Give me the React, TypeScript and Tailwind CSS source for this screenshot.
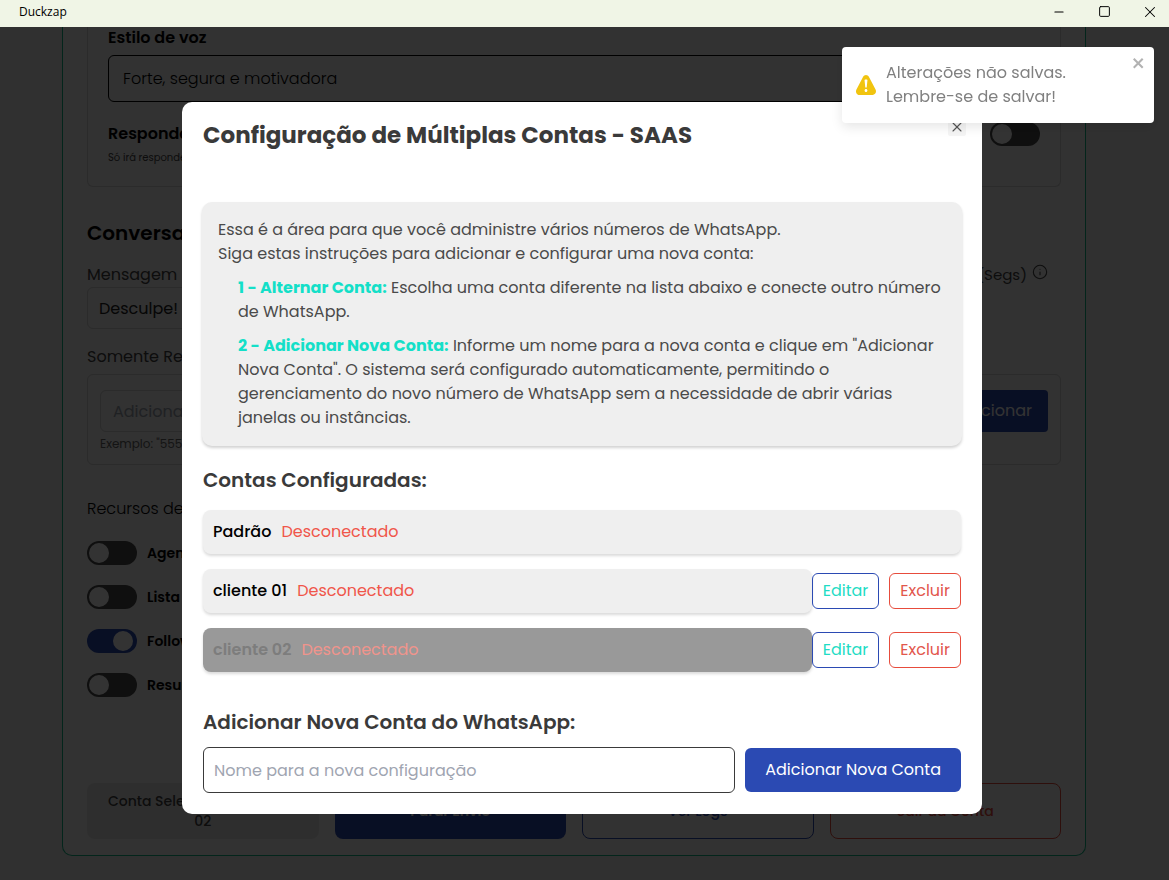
import { useState } from 'react'
import { Info, Minus, Square, X } from 'lucide-react'

type Account = { name: string; fixed?: boolean; selected?: boolean }

const initialAccounts: Account[] = [
  { name: 'Padrão', fixed: true },
  { name: 'cliente 01' },
  { name: 'cliente 02', selected: true },
]

const resources = [
  { label: 'Agenda', on: false },
  { label: 'Lista', on: false },
  { label: 'Follow', on: true },
  { label: 'Resumo', on: false },
]

function Toggle({ label, on, hideLabel }: { label: string; on: boolean; hideLabel?: boolean }) {
  const [checked, setChecked] = useState(on)
  return (
    <label className="relative flex items-center gap-[10px] text-sm leading-6 font-semibold text-black">
      <input type="checkbox" aria-label={label} className="peer absolute h-6 w-[50px] opacity-0" checked={checked} onChange={e => setChecked(e.target.checked)} />
      <span className="flex h-6 w-[50px] shrink-0 items-center rounded-full bg-[#4a4a4a] pr-1 pl-[2px] peer-checked:justify-end peer-checked:bg-[#2b4ab3]">
        <span className="size-5 rounded-full bg-white" />
      </span>
      {!hideLabel && <span>{label}</span>}
    </label>
  )
}

function TitleBar() {
  return (
    <header className="flex h-[27px] items-center justify-between bg-[#f0f5e6] pr-3 pb-1 pl-[19px] text-black">
      <h1 className="font-['Open_Sans',sans-serif] text-xs leading-6">Duckzap</h1>
      <div className="flex items-center gap-[32px]">
        <button aria-label="Minimizar"><Minus className="size-[14px]" strokeWidth={1.8} /></button>
        <button aria-label="Maximizar"><Square className="size-[13px]" strokeWidth={1.8} /></button>
        <button aria-label="Fechar janela"><X className="-mx-[2px] size-[18px]" strokeWidth={1.4} /></button>
      </div>
    </header>
  )
}

function SettingsPage() {
  return (
    <main className="bg-[#ededed] pr-[21px] pb-6">
      <div className="mx-auto max-w-5xl rounded-b-[10px] border-x border-b border-[#12b886] bg-[#f7f7f7] px-6 pb-4 text-[#444]">
        <section className="rounded-b-md border-x border-b border-[#d4d4d4] px-5 pb-5">
          <label htmlFor="voz" className="block leading-[22px] font-semibold text-black">Estilo de voz</label>
          <input id="voz" defaultValue="Forte, segura e motivadora" className="mt-[6px] h-[47px] w-full rounded-md border border-black px-[14px] font-light text-black" />
          <div className="mt-5 flex items-start justify-between">
            <div>
              <p className="leading-6 font-semibold text-black">Responder</p>
              <p className="mt-1 text-[10px] leading-4">Só irá responder</p>
            </div>
            <Toggle label="Responder" on={false} hideLabel />
          </div>
        </section>

        <h2 className="mt-8 text-xl leading-7 font-semibold text-black">Conversa</h2>
        <div className="mt-4 flex justify-between">
          <div className="w-1/2">
            <label htmlFor="msg" className="block leading-6">Mensagem</label>
            <input id="msg" defaultValue="Desculpe!" className="h-[42px] w-full rounded-md border border-[#d4d4d4] px-[11px] text-[#222]" />
          </div>
          <div className="flex h-6 items-center gap-[5px] pr-[13px] text-[15px]">
            (Segs)
            <Info className="mb-[6px] size-4" strokeWidth={1.6} />
          </div>
        </div>

        <p className="mt-4 leading-6">Somente Responder</p>
        <section className="mt-[5px] rounded-md border border-[#d4d4d4] px-3 pt-[15px] pb-3">
          <div className="flex gap-2">
            <input aria-label="Número" placeholder="Adicionar" className="h-[42px] min-w-0 flex-1 rounded-md border border-[#d4d4d4] px-3 placeholder:text-[#9ca3af]" />
            <button className="h-[42px] rounded bg-[#2b4ab3] px-4 text-white">Adicionar</button>
          </div>
          <p className="mt-1 text-xs leading-4 text-[#666]">Exemplo: "5551"</p>
        </section>

        <p className="mt-8 leading-6 font-light text-black">Recursos de</p>
        <div className="mt-5 flex flex-col items-start gap-5">
          {resources.map(r => <Toggle key={r.label} label={r.label} on={r.on} />)}
        </div>

        <div className="mt-[86px] grid grid-cols-4 gap-4 text-sm leading-5">
          <p className="rounded-lg bg-[#e6e6e6] px-4 py-2 text-center font-medium">Conta Selecionada: cliente 02</p>
          <button className="rounded-lg bg-[#2b4ab3] font-semibold text-white">Parar Envio</button>
          <button className="rounded-lg border border-[#2b4ab3] font-medium text-[#2b4ab3]">Ver Logs</button>
          <button className="rounded-lg border border-[#e74c3c] font-medium text-[#e74c3c]">Sair da Conta</button>
        </div>
      </div>
    </main>
  )
}

function AccountRow({ account, onRemove }: { account: Account; onRemove: () => void }) {
  return (
    <li className="flex items-center">
      <button
        disabled={account.selected}
        className="flex h-11 flex-1 items-center gap-[10px] rounded-lg bg-[#efefef] px-[10px] font-medium text-black shadow-[0_2px_3px_rgba(0,0,0,0.15)] disabled:bg-[#999] disabled:font-semibold disabled:text-[#7d7d7d]"
      >
        {account.name}
        <span className={account.selected ? 'font-normal text-[#f0948c]' : 'font-normal text-[#f0564a]'}>Desconectado</span>
      </button>
      {!account.fixed && (
        <div className="flex gap-[10px]">
          <button className="h-9 rounded-md border border-[#2b4ab3] px-[10px] text-[#1fdcc5]">Editar</button>
          <button onClick={onRemove} className="h-9 rounded-md border border-[#e74c3c] px-[10px] text-[#e2574c]">Excluir</button>
        </div>
      )}
    </li>
  )
}

function AccountsModal() {
  const [accounts, setAccounts] = useState(initialAccounts)
  const [name, setName] = useState('')

  function add(e: React.FormEvent) {
    e.preventDefault()
    if (!name.trim()) return
    setAccounts([...accounts, { name }])
    setName('')
  }

  return (
    <div className="fixed inset-x-0 top-[27px] bottom-0 flex items-start justify-center bg-black/80 pt-[75px] pr-[5px]">
      <div role="dialog" aria-labelledby="modal-title" className="relative w-full max-w-[800px] rounded-[10px] bg-white px-5 pt-4 pb-[21px] text-[#3a3a3a]">
        <button aria-label="Fechar" className="absolute top-4 right-4 flex size-[18px] items-center justify-center rounded-xs bg-[#f5f5f5] text-[#555]">
          <X className="size-4" strokeWidth={1.6} />
        </button>
        <h2 id="modal-title" className="px-px text-[23px] leading-[34px] font-bold">Configuração de Múltiplas Contas - SAAS</h2>

        <div className="mt-[50px] rounded-[10px] bg-[#efefef] p-4 leading-6 text-[#4a4a4a] shadow-[0_2px_3px_rgba(0,0,0,0.18)]">
          <p>Essa é a área para que você administre vários números de WhatsApp.<br />Siga estas instruções para adicionar e configurar uma nova conta:</p>
          <ul className="mt-[10px] flex flex-col gap-[10px] pl-5">
            <li><b className="text-[#14dfc8]">1 - Alternar Conta:</b> Escolha uma conta diferente na lista abaixo e conecte outro número de WhatsApp.</li>
            <li><b className="text-[#14dfc8]">2 - Adicionar Nova Conta:</b> Informe um nome para a nova conta e clique em "Adicionar Nova Conta". O sistema será configurado automaticamente, permitindo o gerenciamento do novo número de WhatsApp sem a necessidade de abrir várias janelas ou instâncias.</li>
          </ul>
        </div>

        <div className="px-px">
          <h3 className="mt-5 text-xl leading-7 font-semibold">Contas Configuradas:</h3>
          <ul className="mt-4 flex flex-col gap-[15px]">
            {accounts.map(a => (
              <AccountRow key={a.name} account={a} onRemove={() => setAccounts(accounts.filter(x => x !== a))} />
            ))}
          </ul>

          <form onSubmit={add}>
            <label htmlFor="nome" className="mt-9 block text-xl leading-7 font-semibold">Adicionar Nova Conta do WhatsApp:</label>
            <div className="mt-[11px] flex items-center gap-[10px]">
              <input id="nome" value={name} onChange={e => setName(e.target.value)} placeholder="Nome para a nova configuração" className="h-[46px] min-w-0 flex-1 rounded-md border border-[#3a3a3a] px-[10px] placeholder:text-[#9fa5b1]" />
              <button className="h-11 rounded-md bg-[#2b4ab3] px-5 text-white">Adicionar Nova Conta</button>
            </div>
          </form>
        </div>
      </div>
    </div>
  )
}

function Toast() {
  const [open, setOpen] = useState(true)
  if (!open) return null
  return (
    <div role="alert" className="fixed top-[47px] right-[15px] flex w-[312px] items-center gap-[10px] rounded bg-white p-[14px] text-[#808080] shadow-[0_4px_12px_rgba(0,0,0,0.1)]">
      <svg viewBox="0 0 24 24" className="size-5 shrink-0" fill="#f1c40f">
        <path d="M23.32 17.191L15.438 2.184C14.728.833 13.416 0 11.996 0c-1.42 0-2.733.833-3.443 2.184L.533 17.448a4.744 4.744 0 000 4.368C1.243 23.167 2.555 24 3.975 24h16.05C22.22 24 24 22.044 24 19.632c0-.904-.251-1.746-.68-2.44zm-9.622 1.46c0 1.033-.724 1.823-1.698 1.823s-1.698-.79-1.698-1.822v-.043c0-1.028.724-1.822 1.698-1.822s1.698.79 1.698 1.822v.043zm.039-12.285l-.84 8.06c-.057.581-.408.943-.897.943-.49 0-.84-.367-.896-.942l-.84-8.065c-.057-.624.25-1.095.779-1.095h1.91c.528.005.84.476.784 1.1z" />
      </svg>
      <p className="leading-6">Alterações não salvas.<br />Lembre-se de salvar!</p>
      <button aria-label="Fechar aviso" onClick={() => setOpen(false)} className="absolute top-2 right-2">
        <svg viewBox="0 0 14 16" className="h-4 w-[14px]" fill="#b2b2b2">
          <path fillRule="evenodd" d="M7.71 8.23l3.75 3.75-1.48 1.48-3.75-3.75-3.75 3.75L1 11.98l3.75-3.75L1 4.48 2.48 3l3.75 3.75L9.98 3l1.48 1.48-3.75 3.75z" />
        </svg>
      </button>
    </div>
  )
}

export default function App() {
  return (
    <div className="min-h-screen bg-[#ededed] font-['Poppins','Inter',sans-serif]">
      <TitleBar />
      <SettingsPage />
      <AccountsModal />
      <Toast />
    </div>
  )
}
